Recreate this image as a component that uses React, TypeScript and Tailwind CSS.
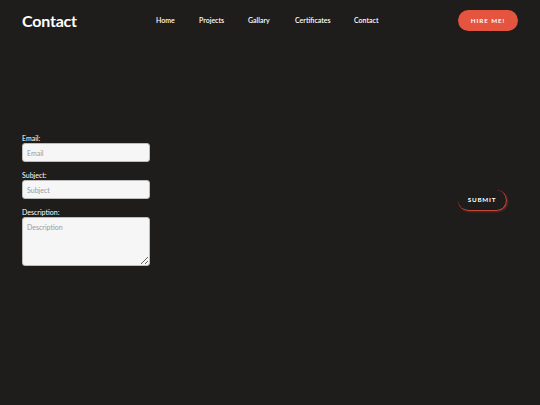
import React from "react";

export default function App() {
  const font = { fontFamily: "Lato, 'Open Sans', sans-serif" };
  return (
    <div className="w-[540px] h-[405px] bg-[#1e1d1b] text-white overflow-hidden" style={font}>
      <header className="h-[41px] flex items-center pl-[22px] pr-[22px]">
        <div className="text-[16px] font-bold tracking-[-0.2px] w-[134px]">Contact</div>
        <nav className="flex items-center text-[7px] font-semibold">
          <span className="w-[43px]">Home</span>
          <span className="w-[49px]">Projects</span>
          <span className="w-[47px]">Gallary</span>
          <span className="w-[59px]">Certificates</span>
          <span>Contact</span>
        </nav>
        <div className="ml-auto h-[21px] w-[60px] rounded-full bg-[#e5543f] flex items-center justify-center text-[6.3px] font-bold tracking-[0.9px]">
          HIRE ME!
        </div>
      </header>
      <main className="flex items-center pl-[22px] pr-[33px] mt-[93px]">
        <form className="w-[128px] flex flex-col text-[7px]">
          <label className="leading-[9px]">Email:</label>
          <input placeholder="Email" className="h-[19px] rounded-[3px] bg-[#f6f6f6] border border-[#bcbcbc] px-[4px] text-[7px] text-black placeholder:text-[#9a9a9a] outline-none" style={font} />
          <label className="mt-[9px] leading-[9px]">Subject:</label>
          <input placeholder="Subject" className="h-[19px] rounded-[3px] bg-[#f6f6f6] border border-[#bcbcbc] px-[4px] text-[7px] text-black placeholder:text-[#9a9a9a] outline-none" style={font} />
          <label className="mt-[9px] leading-[9px]">Description:</label>
          <textarea placeholder="Description" className="h-[49px] rounded-[3px] bg-[#f6f6f6] border border-[#bcbcbc] px-[4px] py-[4px] text-[7px] text-black placeholder:text-[#9a9a9a] outline-none resize-y" style={font} />
        </form>
        <div className="ml-auto mt-[1px] h-[21px] w-[49px] rounded-[12px] border-b-[1.5px] border-r-[1.5px] border-t-0 border-l-0 border-[#c4463b] shadow-[1px_1px_2px_0_rgba(229,84,63,0.3)] flex items-center justify-center text-[6.3px] font-bold tracking-[0.8px]">
          SUBMIT
        </div>
      </main>
    </div>
  );
}
